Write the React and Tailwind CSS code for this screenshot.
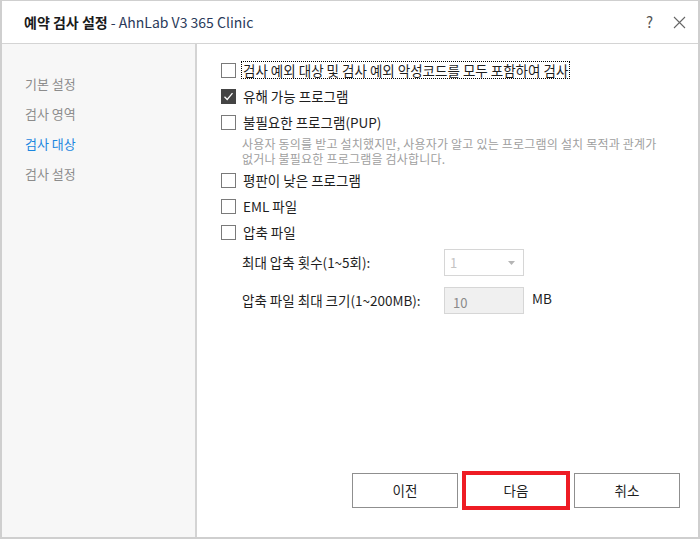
import React from "react";

const font = { fontFamily: '"Noto Sans CJK KR", "Noto Sans", sans-serif' };

function Check({ checked }) {
  return checked ? (
    <span className="w-[15px] h-[15px] bg-[#444] flex items-center justify-center shrink-0">
      <svg width="11" height="11" viewBox="0 0 11 11">
        <path d="M1.5 5.8 L4.2 8.5 L9.5 2.2" stroke="#fff" strokeWidth="1.3" fill="none" />
      </svg>
    </span>
  ) : (
    <span className="w-[15px] h-[15px] border border-[#7a7a7a] bg-white shrink-0" />
  );
}

function Row({ checked, label, focus }) {
  return (
    <div className="flex items-center h-[26px]">
      <Check checked={checked} />
      <span
        className={
          "ml-[6px] text-[13.5px] text-[#1e1e1e] leading-[16px] px-[1px] " +
          (focus ? "outline outline-1 outline-dotted outline-black" : "")
        }
      >
        {label}
      </span>
    </div>
  );
}

export default function App() {
  const menu = ["기본 설정", "검사 영역", "검사 대상", "검사 설정"];

  return (
    <div style={font} className="w-[700px] h-[539px] bg-white border-2 border-[#cfcfcf] border-t-[1px] flex flex-col overflow-hidden">
      <div className="h-[43px] shrink-0 flex items-center justify-between pl-[22px] pr-[12px] border-b border-[#d4d4d4]">
        <div className="text-[14px] text-[#1a1a1a]">
          <span className="font-bold">예약 검사 설정</span>
          <span className="text-[#2a3a5a]"> - AhnLab V3 365 Clinic</span>
        </div>
        <div className="flex items-center gap-[20px] text-[#555]">
          <span className="text-[15px]">?</span>
          <svg width="13" height="13" viewBox="0 0 13 13">
            <path d="M1 1 L12 12 M12 1 L1 12" stroke="#666" strokeWidth="1.1" />
          </svg>
        </div>
      </div>

      <div className="flex flex-1 min-h-0">
        <div className="w-[195px] shrink-0 bg-[#f7f7f7] border-r-2 border-[#d4d4d4] pt-[30px] pl-[23px] flex flex-col">
          {menu.map((m, i) => (
            <div
              key={m}
              className={"h-[30px] text-[13px] " + (i === 2 ? "text-[#1b86df]" : "text-[#8c8c8c]")}
            >
              {m}
            </div>
          ))}
        </div>

        <div className="flex-1 flex flex-col pl-[24px] pr-[18px] pt-[13px] pb-[27px]">
          <Row focus label="검사 예외 대상 및 검사 예외 악성코드를 모두 포함하여 검사" />
          <Row checked label="유해 가능 프로그램" />
          <Row label="불필요한 프로그램(PUP)" />
          <div className="ml-[21px] mt-[1px] mb-[1px] text-[12px] tracking-[0.2px] text-[#a0a0a0] flex flex-col">
            <span className="leading-[15px]">사용자 동의를 받고 설치했지만, 사용자가 알고 있는 프로그램의 설치 목적과 관계가</span>
            <span className="leading-[15px]">없거나 불필요한 프로그램을 검사합니다.</span>
          </div>
          <Row label="평판이 낮은 프로그램" />
          <Row label="EML 파일" />
          <Row label="압축 파일" />

          <div className="ml-[21px] mt-[4px] flex flex-col gap-[11px]">
            <div className="flex items-center">
              <span className="w-[202px] text-[13.5px] text-[#1e1e1e]">최대 압축 횟수(1~5회):</span>
              <div className="w-[80px] h-[27px] border border-[#d6d6d6] bg-white flex items-center justify-between pl-[5px] pr-[8px]">
                <span className="text-[13px] text-[#c4c4c4]">1</span>
                <svg width="7" height="4" viewBox="0 0 7 4">
                  <path d="M0 0 L7 0 L3.5 4 Z" fill="#b5b5b5" />
                </svg>
              </div>
            </div>
            <div className="flex items-center">
              <span className="w-[202px] text-[13.5px] text-[#1e1e1e]">압축 파일 최대 크기(1~200MB):</span>
              <div className="w-[80px] h-[27px] border border-[#d6d6d6] bg-[#f0f0f0] flex items-center pl-[8px] pt-[4px]">
                <span className="text-[13px] text-[#8a8a8a]">10</span>
              </div>
              <span className="ml-[8px] -mt-[4px] text-[13.5px] text-[#1e1e1e]">MB</span>
            </div>
          </div>

          <div className="mt-auto flex justify-end gap-[4px] items-center">
            <button className="w-[106px] h-[35px] border border-[#8f8f8f] bg-white text-[13.5px] text-[#1e1e1e]">
              이전
            </button>
            <button className="w-[108px] h-[39px] border-[4px] border-[#ee1c24] bg-white text-[13.5px] text-[#1e1e1e]">
              다음
            </button>
            <button className="w-[106px] h-[35px] border border-[#8f8f8f] bg-white text-[13.5px] text-[#1e1e1e]">
              취소
            </button>
          </div>
        </div>
      </div>
    </div>
  );
}
